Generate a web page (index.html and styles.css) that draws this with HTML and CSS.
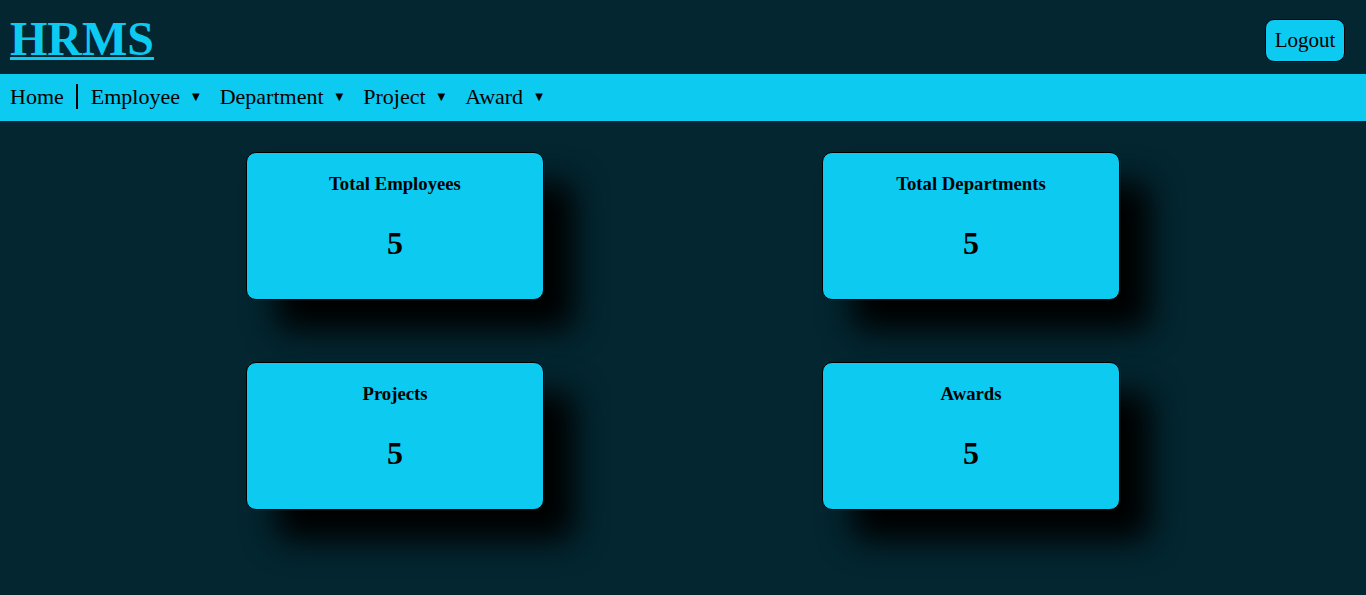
FILE: index.html
```html
<!DOCTYPE html>
<html>
<head>
<meta charset="utf-8">
<title>HRMS</title>
<link rel="stylesheet" href="styles.css">
</head>
<body>
<header class="topbar">
  <a class="brand" href="#">HRMS</a>
  <button class="logout">Logout</button>
</header>
<nav class="menu">
  <span class="menu-item home">Home</span>
  <span class="sep"></span>
  <span class="menu-item">Employee<span class="caret">&#9660;</span></span>
  <span class="menu-item">Department<span class="caret">&#9660;</span></span>
  <span class="menu-item">Project<span class="caret">&#9660;</span></span>
  <span class="menu-item">Award<span class="caret">&#9660;</span></span>
</nav>
<main class="cards">
  <div class="card"><div class="card-title">Total Employees</div><div class="card-value">5</div></div>
  <div class="card"><div class="card-title">Total Departments</div><div class="card-value">5</div></div>
  <div class="card"><div class="card-title">Projects</div><div class="card-value">5</div></div>
  <div class="card"><div class="card-title">Awards</div><div class="card-value">5</div></div>
</main>
</body>
</html>
```
FILE: styles.css
```css
html, body {
  margin: 0;
  padding: 0;
  background: #032630;
  font-family: "Liberation Serif", "Times New Roman", serif;
  color: #000;
}
.topbar {
  height: 74px;
  display: flex;
  align-items: center;
  justify-content: space-between;
  padding: 0 21px 0 10px;
}
.brand {
  color: #0dcaf0;
  font-size: 48px;
  font-weight: bold;
  text-decoration: underline;
  text-decoration-thickness: 3px;
  line-height: 1;
  margin-top: 4px;
}
.logout {
  background: #0dcaf0;
  border: 1px solid #000;
  border-radius: 9px;
  font-family: "Liberation Serif", serif;
  font-size: 21px;
  color: #000;
  width: 80px;
  height: 43px;
  padding: 0;
  margin-top: 6px;
}
.menu {
  background: #0dcaf0;
  height: 47px;
  display: flex;
  align-items: center;
  padding-left: 10px;
  font-size: 22px;
  padding-bottom: 2px;
  box-sizing: border-box;
}
.menu-item {
  display: flex;
  align-items: center;
  margin-right: 20px;
}
.menu-item.home {
  margin-right: 12px;
}
.sep {
  width: 2px;
  height: 25px;
  background: #000;
  margin-right: 13px;
}
.caret {
  font-size: 10px;
  margin-left: 12px;
  font-family: "DejaVu Sans", sans-serif;
}
.cards {
  display: grid;
  grid-template-columns: 298px 298px;
  justify-content: center;
  column-gap: 278px;
  row-gap: 62px;
  padding: 31px 0 90px;
}
.card {
  height: 148px;
  box-sizing: border-box;
  background: #0dcaf0;
  border: 1px solid #000;
  border-radius: 10px;
  box-shadow: 30px 30px 32px #000;
  text-align: center;
}
.card-title {
  font-weight: bold;
  font-size: 18.72px;
  margin-top: 20px;
}
.card-value {
  font-weight: bold;
  font-size: 32px;
  margin-top: 30px;
}
```
